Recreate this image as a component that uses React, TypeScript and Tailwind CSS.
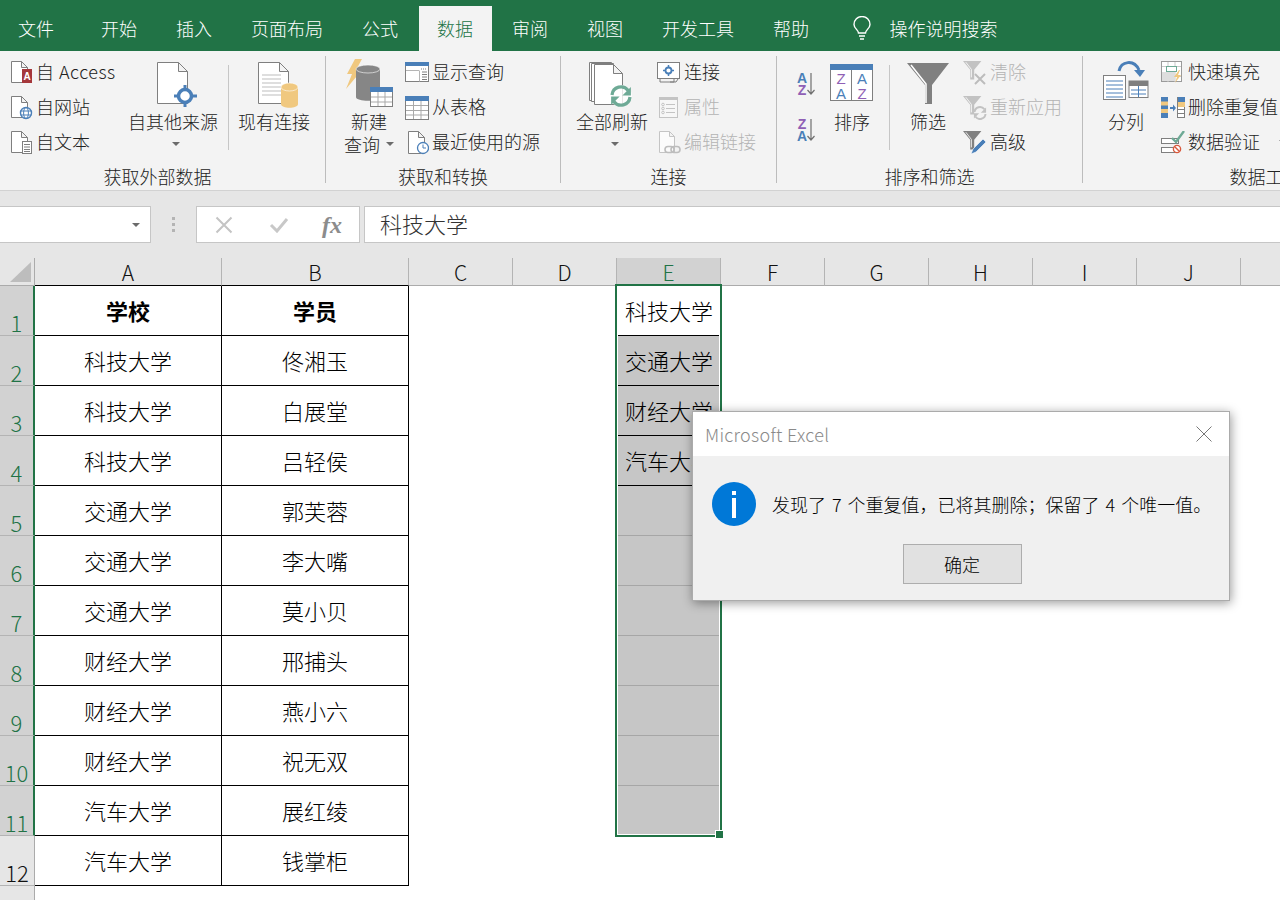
import type { ReactNode } from "react";

const BLUE = "#4a7fb8";
const ORANGE = "#f0c87f";
const PURPLE = "#8f5fb5";
const EDGE = "#7f7f7f";

const tabs = ["开始", "插入", "页面布局", "公式"];
const tabsAfter = ["审阅", "视图", "开发工具", "帮助"];

const columns = [
  { name: "A", width: "w-[187px]" },
  { name: "B", width: "w-[187px]" },
  { name: "C", width: "w-[104px]" },
  { name: "D", width: "w-[104px]" },
  { name: "E", width: "w-[104px]" },
  { name: "F", width: "w-[104px]" },
  { name: "G", width: "w-[104px]" },
  { name: "H", width: "w-[104px]" },
  { name: "I", width: "w-[104px]" },
  { name: "J", width: "w-[104px]" },
];

const rows = [
  ["学校", "学员", "科技大学"],
  ["科技大学", "佟湘玉", "交通大学"],
  ["科技大学", "白展堂", "财经大学"],
  ["科技大学", "吕轻侯", "汽车大学"],
  ["交通大学", "郭芙蓉", ""],
  ["交通大学", "李大嘴", ""],
  ["交通大学", "莫小贝", ""],
  ["财经大学", "邢捕头", ""],
  ["财经大学", "燕小六", ""],
  ["财经大学", "祝无双", ""],
  ["汽车大学", "展红绫", ""],
  ["汽车大学", "钱掌柜", ""],
];

const Doc = ({ x, y, w, h, f = 6 }: { x: number; y: number; w: number; h: number; f?: number }) => (
  <path
    d={`M${x + 0.5} ${y + 0.5}h${w - f}l${f} ${f}v${h - f}h-${w}zM${x + w - f + 0.5} ${y + 0.5}v${f}h${f}`}
    fill="#fff"
    stroke={EDGE}
  />
);

const Cylinder = ({ x, y, w, h, fill }: { x: number; y: number; w: number; h: number; fill: string }) => (
  <g>
    <path d={`M${x} ${y + 4}v${h - 8}c0 5 ${w} 5 ${w} 0v-${h - 8}z`} fill={fill} />
    <ellipse cx={x + w / 2} cy={y + 4} rx={w / 2} ry={4} fill={fill} stroke="#fff" strokeOpacity="0.6" />
  </g>
);

const Funnel = ({ color, size = 1 }: { color: string; size?: number }) => (
  <g transform={`scale(${size})`}>
    <path d="M0 0h23l-9 11v12h-5v-12z" fill={color} />
    <path d="M3.5 1.5l7 9v10" fill="none" stroke="#fff" strokeWidth="1" />
  </g>
);

const Refresh = ({ cx, cy, r, color }: { cx: number; cy: number; r: number; color: string }) => (
  <g fill="none" stroke={color} strokeWidth={r * 0.36}>
    <path d={`M${cx - r} ${cy - 1}a${r} ${r} 0 0 1 ${r * 1.8} ${-r * 0.5}`} />
    <path d={`M${cx + r} ${cy + 1}a${r} ${r} 0 0 1 ${-r * 1.8} ${r * 0.5}`} />
    <path d={`M${cx + r * 1.1} ${cy - r}v${r * 0.95}h${-r * 0.95}z`} fill={color} stroke="none" />
    <path d={`M${cx - r * 1.1} ${cy + r}v${-r * 0.95}h${r * 0.95}z`} fill={color} stroke="none" />
  </g>
);

const Icon = ({ w = 24, h = 24, children }: { w?: number; h?: number; children: ReactNode }) => (
  <svg width={w} height={h} viewBox={`0 0 ${w} ${h}`} className="shrink-0 block">
    {children}
  </svg>
);

// small ribbon icons, 24x24
const AccessIcon = () => (
  <Icon>
    <Doc x={2} y={0} w={16} h={21} />
    <rect x="13" y="8" width="10" height="14" fill="#a5373b" />
    <text x="18" y="19" fontSize="10" fontWeight="700" fill="#fff" textAnchor="middle" fontFamily="Liberation Sans">A</text>
  </Icon>
);
const WebIcon = () => (
  <Icon>
    <Doc x={2} y={0} w={16} h={21} />
    <circle cx="17" cy="17" r="5.5" fill="#fff" stroke={BLUE} strokeWidth="1.4" />
    <ellipse cx="17" cy="17" rx="2.4" ry="5.5" fill="none" stroke={BLUE} />
    <path d="M11.5 15h11M11.5 19h11" stroke={BLUE} />
  </Icon>
);
const TextIcon = () => (
  <Icon>
    <Doc x={2} y={0} w={16} h={21} />
    <rect x="13.5" y="10.5" width="9" height="12" fill="#fff" stroke={EDGE} />
    <path d="M15 13.5h6M15 16h6M15 18.500h6M15 20.500h6" stroke={EDGE} />
  </Icon>
);
const ShowQueryIcon = () => (
  <Icon>
    <rect x="0.5" y="1.500" width="23" height="19" fill="#fff" stroke={EDGE} />
    <rect y="1" width="24" height="4" fill={BLUE} />
    <path d="M16 8h6" stroke={EDGE} strokeDasharray="1 1" />
    <path d="M17 11h5M17 13.500h5M17 16h5M17 18.500h5" stroke={EDGE} />
    <path d="M14.500 9.500v11M1 9.500h13" stroke="#b5b5b5" />
  </Icon>
);
const FromTableIcon = () => (
  <Icon>
    <rect x="0.500" y="0.500" width="23" height="23" fill="#fff" stroke={EDGE} />
    <rect width="24" height="5" fill={BLUE} />
    <path d="M1 9.500h22M1 14.500h22M1 19h22M8.500 5v18M16 5v18" stroke="#a9a9a9" />
  </Icon>
);
const RecentIcon = () => (
  <Icon>
    <Doc x={3} y={0} w={16} h={22} />
    <circle cx="18" cy="17" r="5.500" fill="#fff" stroke={BLUE} strokeWidth="1.300" />
    <path d="M18 13.500v3.500h3" fill="none" stroke={BLUE} />
  </Icon>
);
const ConnectIcon = () => (
  <Icon>
    <rect x="0.500" y="1.500" width="22" height="16" fill="#fff" stroke={EDGE} />
    <path d="M3 18v3h14v-3M13 21h6l2-3" fill="none" stroke={EDGE} />
    <circle cx="11.500" cy="9.500" r="3" fill="none" stroke={BLUE} strokeWidth="1.800" />
    <path d="M11.500 4v3M11.500 12v3M6 9.500h3M14 9.500h3" stroke={BLUE} strokeWidth="1.500" />
  </Icon>
);
const PropsIcon = () => (
  <Icon>
    <rect x="2.500" y="1.500" width="18" height="20" fill="#f7f7f7" stroke="#c4c4c4" />
    <rect x="2" y="1" width="19" height="3" fill="#c4c4c4" />
    <path d="M9 8.500h9M9 12.500h9M9 16.500h9" stroke="#c4c4c4" />
    <circle cx="6" cy="8.500" r="1.300" fill="none" stroke="#c4c4c4" />
    <circle cx="6" cy="12.500" r="1.300" fill="none" stroke="#c4c4c4" />
    <circle cx="6" cy="16.500" r="1.300" fill="none" stroke="#c4c4c4" />
  </Icon>
);
const EditLinkIcon = () => (
  <Icon>
    <path d="M2.500 0.500h10l5 5v16h-15z M12.500 0.500v5h5" fill="#fbfbfb" stroke="#c4c4c4" />
    <rect x="8" y="15.500" width="9" height="6" rx="3" fill="none" stroke="#bdbdbd" strokeWidth="1.600" />
    <rect x="14" y="15.500" width="9" height="6" rx="3" fill="none" stroke="#bdbdbd" strokeWidth="1.600" />
  </Icon>
);
const ClearIcon = () => (
  <Icon>
    <Funnel color="#c2c2c2" size={0.8} />
    <path d="M12 13l10 10M22 13l-10 10" stroke="#bcbcbc" strokeWidth="2" />
  </Icon>
);
const ReapplyIcon = () => (
  <Icon>
    <Funnel color="#c2c2c2" size={0.8} />
    <Refresh cx={17} cy={17} r={5.500} color="#c2c2c2" />
  </Icon>
);
const AdvancedIcon = () => (
  <Icon>
    <Funnel color="#808080" size={0.8} />
    <path d="M8 23l2-5 10-10 3 3-10 10z" fill={BLUE} stroke="#fff" strokeWidth="0.600" />
  </Icon>
);
const FlashFillIcon = () => (
  <Icon>
    <rect x="0.500" y="0.500" width="20" height="20" fill="#fff" stroke="#9a9a9a" />
    <path d="M1 5.500h19M1 15.500h19M7 1v20M14 1v20" stroke="#c9c9c9" />
    <rect x="5.500" y="5.500" width="10" height="5" fill="#fff" stroke="#6eaa96" />
    <rect x="1" y="11" width="13" height="9" fill="#dedede" />
    <path d="M18 9l-5 7h3l-2 6 6-8h-3l2-5z" fill={ORANGE} />
  </Icon>
);
const DedupeIcon = () => (
  <Icon>
    <rect x="0" y="1" width="7" height="21" fill={BLUE} />
    <rect x="0" y="5.500" width="7" height="4" fill={ORANGE} />
    <rect x="0" y="13" width="7" height="4" fill={ORANGE} />
    <rect x="16.500" y="1.500" width="7" height="20" fill="#fff" stroke={EDGE} />
    <rect x="17" y="1" width="7" height="5" fill={BLUE} />
    <rect x="17" y="6" width="7" height="5" fill={ORANGE} />
    <path d="M17 13.500h6M17 17.500h6" stroke={EDGE} />
    <path d="M9 11h3v-2.500l3 3.500-3 3.500v-2.500h-3z" fill={BLUE} />
  </Icon>
);
const ValidateIcon = () => (
  <Icon>
    <rect x="0.500" y="7.500" width="17" height="5" fill="#fff" stroke={EDGE} />
    <rect x="0.500" y="16.500" width="13" height="5" fill="#fff" stroke={EDGE} />
    <path d="M11 7l4 4 8-11" fill="none" stroke="#6eaa96" strokeWidth="2.400" />
    <circle cx="16" cy="18" r="3.600" fill="#fff" stroke="#d8593c" strokeWidth="1.400" />
    <path d="M13.500 15.500l5 5" stroke="#d8593c" strokeWidth="1.400" />
  </Icon>
);

// big ribbon icons: 55 high so they all sit on the same line above the label
const OtherSourceIcon = () => (
  <Icon w={44} h={55}>
    <Doc x={0} y={7} w={30} h={41} f={9} />
    <circle cx="28" cy="41" r="6.500" fill="#fff" stroke={BLUE} strokeWidth="3.500" />
    <path d="M28 30v5M28 47v5M17 41h5M34 41h6" stroke={BLUE} strokeWidth="3" />
  </Icon>
);
const ExistingIcon = () => (
  <Icon w={42} h={55}>
    <Doc x={0} y={7} w={30} h={41} f={9} />
    <path d="M4 20h19M4 24h19M4 28h19M4 32h19M4 36h19M4 40h19" stroke="#bdbdbd" />
    <Cylinder x={23} y={28} w={17} h={25} fill={ORANGE} />
  </Icon>
);
const NewQueryIcon = () => (
  <Icon w={50} h={55}>
    <path d="M11 4h7l-6 11h6l-16 19 6-15h-5z" fill={ORANGE} />
    <Cylinder x={12} y={10} w={24} h={36} fill="#868686" />
    <rect x="26.500" y="32.500" width="22" height="19" fill="#fff" stroke={EDGE} />
    <rect x="26" y="32" width="23" height="5" fill={BLUE} />
    <path d="M27 42h21M27 47h21M34 37v14M41 37v14" stroke="#a9a9a9" />
  </Icon>
);
const RefreshAllIcon = () => (
  <Icon w={46} h={55}>
    <path d="M0.500 7.500h22v38h-22z" fill="#fff" stroke={EDGE} />
    <path d="M2.500 8.500h22v38h-22z" fill="#fff" stroke={EDGE} />
    <Doc x={5} y={9} w={28} h={40} f={9} />
    <circle cx="32" cy="41" r="11" fill="#fff" fillOpacity="0.8" />
    <Refresh cx={32} cy={41} r={9} color="#6eaa96" />
  </Icon>
);
const SortIcon = () => (
  <Icon w={44} h={55}>
    <rect x="0.500" y="9.500" width="42" height="36" fill="#fff" stroke={EDGE} />
    <rect y="9" width="43" height="6" fill={BLUE} />
    <path d="M21.500 15v30" stroke={EDGE} />
    <g fontFamily="Liberation Sans" fontSize="15" textAnchor="middle">
      <text x="11" y="29" fill={PURPLE}>Z</text>
      <text x="11" y="44" fill={BLUE}>A</text>
      <text x="32" y="29" fill={BLUE}>A</text>
      <text x="32" y="44" fill={PURPLE}>Z</text>
    </g>
  </Icon>
);
const FilterIcon = () => (
  <Icon w={42} h={55}>
    <path d="M0 8h42l-17 22v19h-7v-19z" fill="#808080" />
    <path d="M4 10l15 19v19" fill="none" stroke="#fff" strokeWidth="1.500" />
  </Icon>
);
const SplitIcon = () => (
  <Icon w={46} h={55}>
    <rect x="0.500" y="20.500" width="22" height="24" fill="#fff" stroke={EDGE} />
    <path d="M3 26h17M3 30h17M3 34h17M3 38h17M3 42h17" stroke={BLUE} />
    <path d="M16 16c2-10 15-12 20-1" fill="none" stroke={BLUE} strokeWidth="3" />
    <path d="M31 15h11l-5 7z" fill={BLUE} />
    <rect x="26" y="26" width="19" height="16.500" fill="#fff" stroke={EDGE} />
    <rect x="26" y="26" width="19" height="5" fill={EDGE} />
    <path d="M35.500 31v11M28 35h15M28 39h15" stroke={BLUE} />
  </Icon>
);
const SortAZ = ({ first, second }: { first: string; second: string }) => (
  <Icon w={22} h={30}>
    <g fontFamily="Liberation Sans" fontSize="14" fontWeight="700" textAnchor="middle">
      <text x="7" y="14" fill={first === "A" ? BLUE : PURPLE}>{first}</text>
      <text x="7" y="26" fill={second === "A" ? BLUE : PURPLE}>{second}</text>
    </g>
    <path d="M16 4v21M12.500 21l3.500 4 3.500-4" fill="none" stroke="#707070" strokeWidth="1.200" />
  </Icon>
);

const Caret = ({ className = "" }: { className?: string }) => (
  <span className={`block w-0 h-0 border-x-[4px] border-x-transparent border-t-[4px] border-t-[#6b6b6b] ${className}`} />
);

const SmallItem = ({ icon, label, disabled, caret, labelClass = "" }: { icon: ReactNode; label: string; disabled?: boolean; caret?: boolean; labelClass?: string }) => (
  <div className={`flex items-center h-[35px] gap-[3px] whitespace-nowrap ${disabled ? "text-[#b4b4b4]" : "text-[#222]"}`}>
    <div className="pt-[3px]">{icon}</div>
    <span className={labelClass}>{label}</span>
    {caret && <Caret className="ml-[16px]" />}
  </div>
);

const BigItem = ({ icon, label, second, caret, width }: { icon: ReactNode; label: string; second?: string; caret?: boolean; width: string }) => (
  <div className={`flex flex-col items-center text-[#222] whitespace-nowrap ${width}`}>
    <div className="h-[55px] pt-[1px]">{icon}</div>
    <div className="h-[23px] leading-[24px]">{label}</div>
    {second && <div className="h-[24px] leading-[24px] flex items-center gap-[6px]">{second}{caret && <Caret />}</div>}
    {!second && caret && <Caret className="mt-[10px] ml-[5px]" />}
  </div>
);

const RibbonGroup = ({ width, label, labelClass = "", children }: { width: string; label: string; labelClass?: string; children: ReactNode }) => (
  <div className={`flex flex-col h-[127px] shrink-0 border-r border-[#bcbcbc] ${width}`}>
    <div className="flex h-[105px] -mt-[2px]">{children}</div>
    <div className={`h-[24px] pt-[10px] leading-[14px] text-center text-[#222] whitespace-nowrap ${labelClass}`}>{label}</div>
  </div>
);

const GroupDivider = ({ className }: { className: string }) => <div className={`w-px h-[85px] mt-[11px] bg-[#c6c6c6] shrink-0 ${className}`} />;

const TopTab = ({ children }: { children: ReactNode }) => (
  <div className="h-[45px] leading-[45px] px-[19.5px] whitespace-nowrap">{children}</div>
);

const Ribbon = () => (
  <div className="flex h-[140px] pt-[5px] bg-[#f3f3f3] border-b border-[#d2d2d2] text-[18px]">
    <RibbonGroup width="w-[326px]" label="获取外部数据" labelClass="pr-[10px]">
      <div className="w-[128px] pl-[9px]">
        <SmallItem icon={<AccessIcon />} label="自 Access" labelClass="tracking-[0.5px]" />
        <SmallItem icon={<WebIcon />} label="自网站" />
        <SmallItem icon={<TextIcon />} label="自文本" />
      </div>
      <BigItem width="w-[90px]" icon={<div className="pl-[12px]"><OtherSourceIcon /></div>} label="自其他来源" caret />
      <GroupDivider className="ml-[10px]" />
      <BigItem width="w-[72px] ml-[9px]" icon={<div className="pl-[10px]"><ExistingIcon /></div>} label="现有连接" />
    </RibbonGroup>
    <RibbonGroup width="w-[235px]" label="获取和转换">
      <BigItem width="w-[52px] ml-[17px]" icon={<NewQueryIcon />} label="新建" second="查询" caret />
      <div className="ml-[10px]">
        <SmallItem icon={<ShowQueryIcon />} label="显示查询" />
        <SmallItem icon={<FromTableIcon />} label="从表格" />
        <SmallItem icon={<RecentIcon />} label="最近使用的源" />
      </div>
    </RibbonGroup>
    <RibbonGroup width="w-[216px]" label="连接">
      <BigItem width="w-[74px] ml-[14px]" icon={<RefreshAllIcon />} label="全部刷新" caret />
      <div className="ml-[8px]">
        <SmallItem icon={<ConnectIcon />} label="连接" />
        <SmallItem icon={<PropsIcon />} label="属性" disabled />
        <SmallItem icon={<EditLinkIcon />} label="编辑链接" disabled />
      </div>
    </RibbonGroup>
    <RibbonGroup width="w-[306px]" label="排序和筛选">
      <div className="ml-[18px] w-[22px] pt-[15px] flex flex-col gap-[16px]">
        <SortAZ first="A" second="Z" />
        <SortAZ first="Z" second="A" />
      </div>
      <BigItem width="w-[44px] ml-[13px]" icon={<SortIcon />} label="排序" />
      <GroupDivider className="ml-[15px]" />
      <BigItem width="w-[42px] ml-[17px]" icon={<FilterIcon />} label="筛选" />
      <div className="ml-[14px]">
        <SmallItem icon={<ClearIcon />} label="清除" disabled />
        <SmallItem icon={<ReapplyIcon />} label="重新应用" disabled />
        <SmallItem icon={<AdvancedIcon />} label="高级" />
      </div>
    </RibbonGroup>
    <RibbonGroup width="w-[366px]" label="数据工具">
      <BigItem width="w-[46px] ml-[20px]" icon={<SplitIcon />} label="分列" />
      <div className="ml-[12px]">
        <SmallItem icon={<FlashFillIcon />} label="快速填充" />
        <SmallItem icon={<DedupeIcon />} label="删除重复值" />
        <SmallItem icon={<ValidateIcon />} label="数据验证" caret />
      </div>
    </RibbonGroup>
  </div>
);

const FormulaBar = () => (
  <div className="flex items-center h-[67px] bg-[#e6e6e6]">
    <div className="flex items-center justify-end w-[151px] h-[37px] pr-[10px] bg-white border-y border-r border-[#c6c6c6]">
      <Caret />
    </div>
    <div className="flex flex-col items-center gap-[3px] w-[45px]">
      <span className="w-[3px] h-[3px] bg-[#b4b4b4]" />
      <span className="w-[3px] h-[3px] bg-[#b4b4b4]" />
      <span className="w-[3px] h-[3px] bg-[#b4b4b4]" />
    </div>
    <div className="flex items-center w-[164px] h-[37px] bg-white border border-[#c6c6c6]">
      <svg width="18" height="18" viewBox="0 0 18 18" className="ml-[18px]">
        <path d="M1.500 1.500l15 15M16.500 1.500l-15 15" stroke="#c4c4c4" strokeWidth="2" />
      </svg>
      <svg width="20" height="16" viewBox="0 0 20 16" className="ml-[36px]">
        <path d="M2 8l6 6L18 2" fill="none" stroke="#c8c8c8" strokeWidth="3" />
      </svg>
      <span className="ml-[33px] font-['Liberation_Serif',serif] italic font-bold text-[24px] leading-none text-[#8c8c8c]">fx</span>
    </div>
    <div className="flex items-center ml-[4px] flex-1 h-[37px] pl-[15px] pb-[3px] bg-white border-y border-l border-[#c6c6c6] text-[22px] text-[#333]">
      科技大学
    </div>
  </div>
);

const ColumnHeaders = () => (
  <div className="flex h-[28px] bg-[#e6e6e6] text-[#111] text-[21px] leading-[28px]">
    <div className="flex items-end justify-end w-[35px] pr-[3px] pb-[3px] border-b border-r border-[#ababab]">
      <svg width="21" height="20" viewBox="0 0 21 20"><path d="M21 0v20H0z" fill="#bdbdbd" /></svg>
    </div>
    {columns.map((c) => (
      <div
        key={c.name}
        className={`${c.width} text-center border-r border-[#b4b4b4] border-b ${c.name === "A" || c.name === "B" ? "border-b-black" : "border-b-[#ababab]"} ${c.name === "E" ? "bg-[#d2d2d2] text-[#217346]" : ""}`}
      >
        {c.name}
      </div>
    ))}
    <div className="flex-1 border-b border-[#ababab]" />
  </div>
);

const Sheet = () => (
  <div className="relative text-[22px] text-black">
    {rows.map((row, i) => {
      const picked = i < 11;
      return (
        <div key={i} className="flex h-[50px]">
          <div
            className={`flex items-end justify-center w-[35px] leading-[24px] pb-[1px] border-b border-b-[#b4b4b4] ${picked ? "bg-[#d2d2d2] text-[#217346] border-r-2 border-r-[#217346]" : "bg-[#e6e6e6] text-[#111] border-r border-r-[#ababab]"}`}
          >
            {i + 1}
          </div>
          <div className={`flex items-center justify-center w-[187px] border-r border-b border-black ${i === 0 ? "font-bold" : ""}`}>{row[0]}</div>
          <div className={`flex items-center justify-center w-[187px] border-r border-b border-black ${i === 0 ? "font-bold" : ""}`}>{row[1]}</div>
          <div className="w-[208px]" />
          {picked && (
            <div
              className={`flex items-center justify-center w-[104px] px-[2px] whitespace-nowrap border-b ${i === 0 ? "bg-white" : "bg-[#c6c6c6]"} ${i < 4 ? "border-black" : i < 10 ? "border-[#a6a6a6]" : "border-white"}`}
            >
              {row[2]}
            </div>
          )}
        </div>
      );
    })}
    <div className="w-[35px] h-[14px] bg-[#e6e6e6] border-r border-[#ababab]" />

    {/* selection of E1:E11 */}
    <div className="absolute left-[615px] top-[-2px] w-[107px] h-[553px] border-2 border-[#217346] pointer-events-none">
      <div className="h-full border-x border-b border-white" />
      <div className="absolute right-[-3px] bottom-[-3px] w-[7px] h-[7px] bg-[#217346] outline outline-1 outline-white" />
    </div>
  </div>
);

const Dialog = () => (
  <div className="absolute left-[692px] top-[411px] w-[538px] h-[190px] bg-[#f0f0f0] border border-[#ababab] shadow-[1px_2px_10px_rgba(0,0,0,0.4)] text-[18px]">
    <div className="flex items-center justify-between h-[44px] pl-[12px] pr-[17px] bg-white text-[#8a8a8a]">
      <span className="tracking-[0.27px]">Microsoft Excel</span>
      <svg width="16" height="16" viewBox="0 0 16 16">
        <path d="M0.500 0.500l15 15M15.500 0.500l-15 15" stroke="#777" />
      </svg>
    </div>
    <div className="flex items-center pt-[26px] pl-[19px]">
      <svg width="44" height="44" viewBox="0 0 44 44" className="shrink-0">
        <circle cx="22" cy="22" r="22" fill="#0078d7" />
        <rect x="20" y="9" width="4" height="4" fill="#fff" />
        <rect x="20" y="16" width="4" height="20" fill="#fff" />
      </svg>
      <span className="ml-[16px] whitespace-nowrap text-black [word-spacing:2px]">发现了 7 个重复值，已将其删除；保留了 4 个唯一值。</span>
    </div>
    <div className="flex justify-center pt-[18px] pl-[2px]">
      <div className="flex items-center justify-center w-[119px] h-[40px] bg-[#e1e1e1] border border-[#adadad] text-black">确定</div>
    </div>
  </div>
);

export default function App() {
  return (
    <div className="relative w-[1280px] h-[900px] overflow-hidden bg-white font-light font-['Noto_Sans_CJK_SC','Noto_Sans',sans-serif]">
      <div className="flex items-end h-[51px] bg-[#217346] text-white text-[18px]">
        <div className="h-[45px] leading-[45px] pl-[18px] pr-[27.5px]">文件</div>
        {tabs.map((t) => <TopTab key={t}>{t}</TopTab>)}
        <div className="h-[45px] leading-[45px] px-[18.5px] mx-[1px] bg-[#f3f3f3] text-[#217346]">数据</div>
        {tabsAfter.map((t) => <TopTab key={t}>{t}</TopTab>)}
        <div className="flex items-center h-[45px] ml-[24px] gap-[19px]">
          <svg width="18" height="25" viewBox="0 0 18 25">
            <path d="M5.500 17c0-3-4.500-4.500-4.500-8.500a8 8 0 0 1 16 0c0 4-4.500 5.500-4.500 8.500z" fill="none" stroke="#fff" strokeWidth="1.400" />
            <path d="M6 20h6M7 23h4" stroke="#fff" strokeWidth="1.600" />
          </svg>
          <span>操作说明搜索</span>
        </div>
      </div>
      <Ribbon />
      <FormulaBar />
      <ColumnHeaders />
      <Sheet />
      <Dialog />
    </div>
  );
}
